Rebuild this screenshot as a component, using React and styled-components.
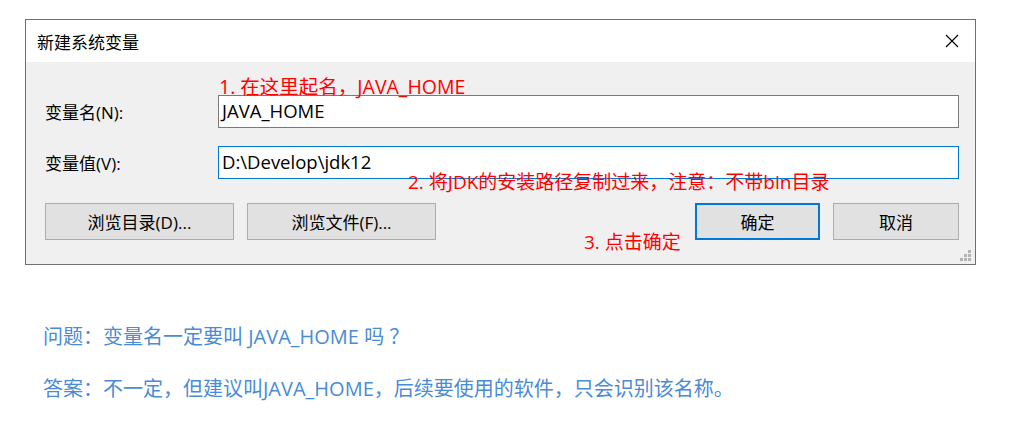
import React from "react";
import styled, { createGlobalStyle } from "styled-components";

const Global = createGlobalStyle`
  html, body { margin: 0; padding: 0; background: #fff; }
  body { font-family: "Open Sans", "Noto Sans CJK SC", sans-serif; }
`;

const Page = styled.div`
  width: 1015px;
  height: 428px;
  padding: 19px 0 0 25px;
  box-sizing: border-box;
  display: flex;
  flex-direction: column;
`;

const Dialog = styled.div`
  width: 951px;
  height: 246px;
  box-sizing: border-box;
  border: 1px solid #6f6f6f;
  display: flex;
  flex-direction: column;
  background: #f0f0f0;
`;

const TitleBar = styled.div`
  height: 42px;
  background: #fff;
  display: flex;
  align-items: center;
  justify-content: space-between;
  padding: 0 16px 0 11px;
  font-family: "Noto Sans CJK SC", sans-serif;
  font-size: 17px;
  color: #000;
`;

const Close = styled.svg`
  width: 14px;
  height: 14px;
`;

const Body = styled.div`
  position: relative;
  flex: 1;
  padding: 33px 16px 0 19px;
  display: flex;
  flex-direction: column;
`;

const Row = styled.div`
  display: flex;
  align-items: center;
  margin-bottom: ${(p) => p.$mb}px;
`;

const Label = styled.div`
  width: 173px;
  font-size: 17px;
  color: #000;
`;

const Input = styled.div`
  flex: 1;
  height: 33px;
  box-sizing: border-box;
  background: #fff;
  border: 1px solid ${(p) => (p.$focus ? "#0078d7" : "#7a7a7a")};
  padding: 0 0 3px 3px;
  display: flex;
  align-items: center;
  font-size: 18.5px;
  color: #000;
`;

const Buttons = styled.div`
  display: flex;
  gap: 13px;
`;

const Spacer = styled.div`
  flex: 1;
`;

const Button = styled.div`
  width: ${(p) => p.$w}px;
  height: 37px;
  box-sizing: border-box;
  background: #e1e1e1;
  border: ${(p) => (p.$default ? "2px solid #0078d7" : "1px solid #adadad")};
  display: flex;
  align-items: center;
  justify-content: center;
  font-size: 17px;
  color: #000;
`;

const Note = styled.div`
  position: absolute;
  left: ${(p) => p.$x}px;
  top: ${(p) => p.$y}px;
  color: #ff0000;
  font-size: ${(p) => p.$size || 19}px;
  line-height: 20px;
  white-space: nowrap;
`;

const Grip = styled.svg`
  position: absolute;
  right: 3px;
  bottom: 2px;
  width: 12px;
  height: 12px;
`;

const Text = styled.div`
  margin-top: ${(p) => p.$mt}px;
  padding-left: 18px;
  color: #4a8bd6;
  font-size: 20px;
  line-height: 24px;
  white-space: nowrap;
`;

export default function App() {
  return (
    <>
      <Global />
      <Page>
        <Dialog>
          <TitleBar>
            <span>新建系统变量</span>
            <Close viewBox="0 0 14 14">
              <path d="M1 1L13 13M13 1L1 13" stroke="#000" strokeWidth="1.2" />
            </Close>
          </TitleBar>
          <Body>
            <Row $mb={18}>
              <Label>变量名(N):</Label>
              <Input>JAVA_HOME</Input>
            </Row>
            <Row $mb={24}>
              <Label>变量值(V):</Label>
              <Input $focus>D:\Develop\jdk12</Input>
            </Row>
            <Buttons>
              <Button $w={189}>浏览目录(D)...</Button>
              <Button $w={189}>浏览文件(F)...</Button>
              <Spacer />
              <Button $w={125} $default>确定</Button>
              <Button $w={126}>取消</Button>
            </Buttons>
            <Note $x={193} $y={15} $size={19.5}>1. 在这里起名，JAVA_HOME</Note>
            <Note $x={382} $y={110}>2. 将JDK的安装路径复制过来，注意：不带bin目录</Note>
            <Note $x={558} $y={170}>3. 点击确定</Note>
            <Grip viewBox="0 0 12 12">
              <g fill="#b4b4b4">
                <rect x="8" y="0" width="3" height="3" />
                <rect x="4" y="4" width="3" height="3" />
                <rect x="8" y="4" width="3" height="3" />
                <rect x="0" y="8" width="3" height="3" />
                <rect x="4" y="8" width="3" height="3" />
                <rect x="8" y="8" width="3" height="3" />
              </g>
            </Grip>
          </Body>
        </Dialog>
        <Text $mt={60}>问题：变量名一定要叫 JAVA_HOME 吗 ？</Text>
        <Text $mt={28}>答案：不一定，但建议叫JAVA_HOME，后续要使用的软件，只会识别该名称。</Text>
      </Page>
    </>
  );
}
